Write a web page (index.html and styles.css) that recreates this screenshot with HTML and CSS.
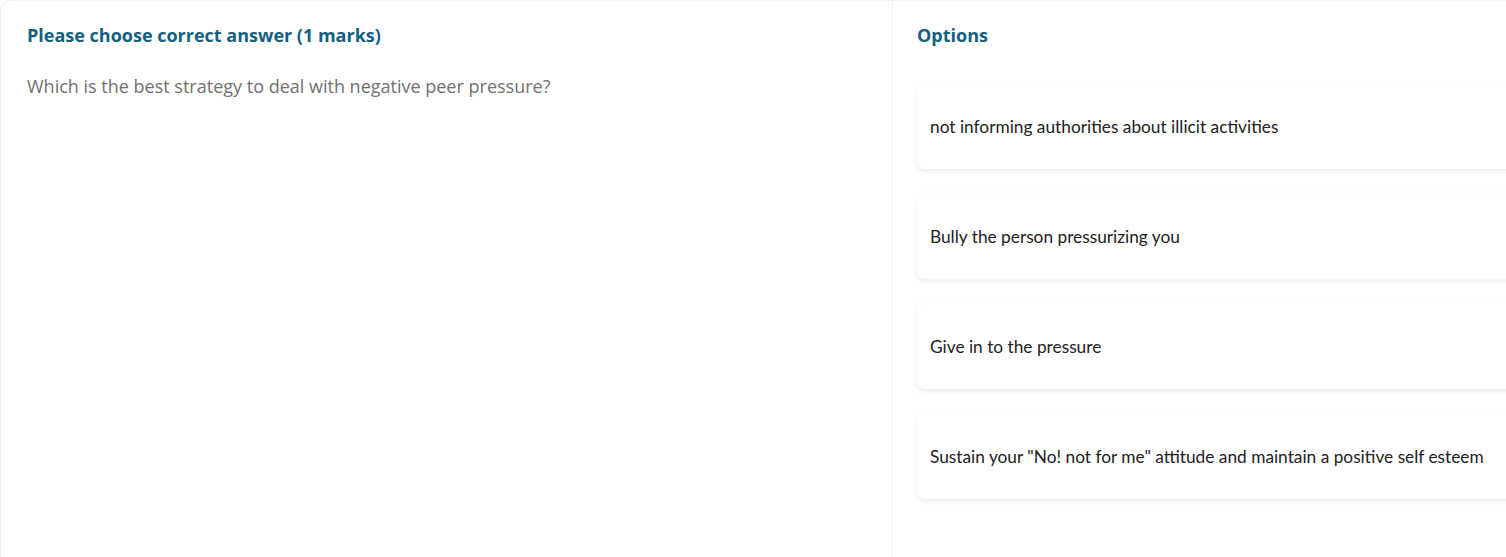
FILE: index.html
```html
<!DOCTYPE html>
<html lang="en">
<head>
    <meta charset="UTF-8">
    <meta name="viewport" content="width=device-width, initial-scale=1.0">
    <title>Question</title>
    <link rel="stylesheet" href="styles.css">
</head>
<body>
    <div class="quiz">
        <div class="question">
            <h2 class="title">Please choose correct answer (1 marks)</h2>
            <p class="text">Which is the best strategy to deal with negative peer pressure?</p>
        </div>
        <div class="options">
            <h2 class="title">Options</h2>
            <div class="option">not informing authorities about illicit activities</div>
            <div class="option">Bully the person pressurizing you</div>
            <div class="option">Give in to the pressure</div>
            <div class="option">Sustain your "No! not for me" attitude and maintain a positive self esteem</div>
        </div>
    </div>
</body>
</html>
```

FILE: styles.css
```css
body {
    margin: 0;
    padding: 0;
    background: #fff;
    font-family: "Open Sans", sans-serif;
    overflow: hidden;
}
.quiz {
    display: flex;
    height: 557px;
    border-left: 1px solid #ececec;
    border-top: 1px solid #f2f2f2;
    border-top-left-radius: 10px;
    box-sizing: border-box;
}
.question {
    width: 892px;
    border-right: 1px solid #efefef;
    padding: 23px 26px;
    box-sizing: border-box;
}
.title {
    margin: 0;
    font-size: 18px;
    font-weight: 700;
    color: #14607f;
    line-height: 22px;
}
.text {
    margin: 28px 0 0;
    font-size: 18px;
    color: #717171;
    line-height: 24px;
}
.options {
    flex: 1;
    padding: 23px 0 0 24px;
    display: flex;
    flex-direction: column;
    gap: 24px;
    min-width: 0;
}
.options .title {
    margin-bottom: 13px;
}
.option {
    margin-right: -20px;
    height: 86px;
    display: flex;
    align-items: center;
    padding: 0 13px;
    background: #fff;
    border-radius: 8px;
    box-shadow: 0 2px 5px rgba(0, 0, 0, 0.08);
    font-family: Lato, sans-serif;
    font-size: 17.3px;
    color: #222;
    flex-shrink: 0;
}
```
